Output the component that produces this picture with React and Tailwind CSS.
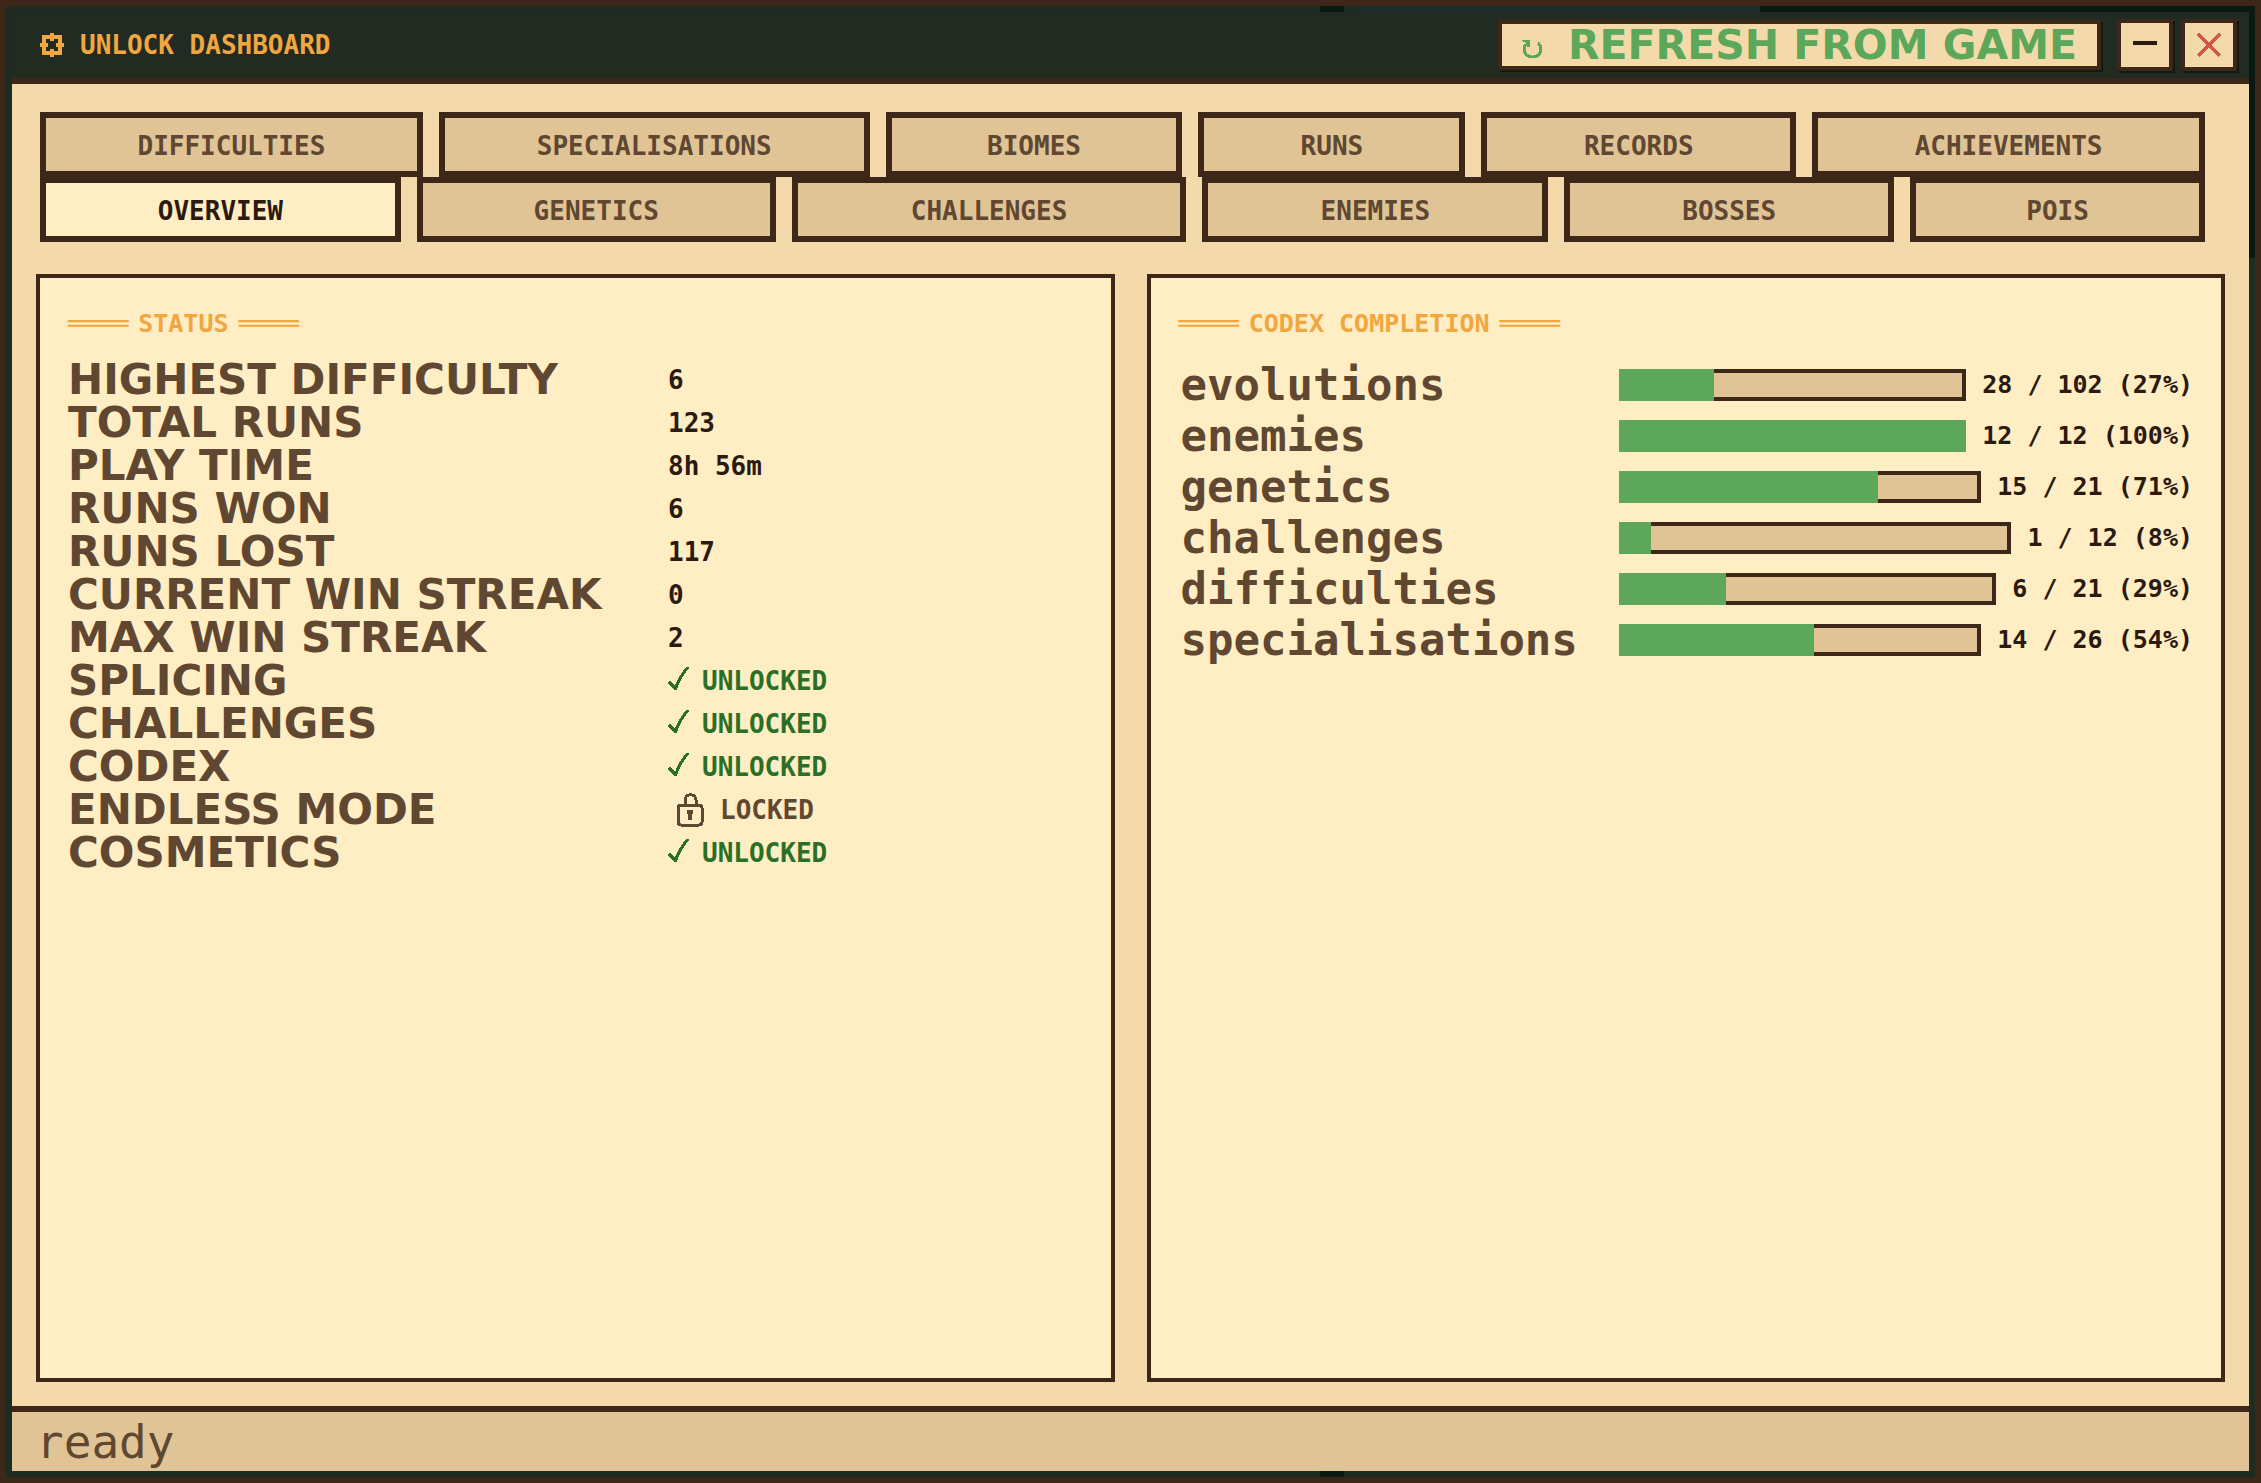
const topTabs = [
  'DIFFICULTIES',
  'SPECIALISATIONS',
  'BIOMES',
  'RUNS',
  'RECORDS',
  'ACHIEVEMENTS',
];

const bottomTabs = [
  'OVERVIEW',
  'GENETICS',
  'CHALLENGES',
  'ENEMIES',
  'BOSSES',
  'POIS',
];

const stats = [
  { label: 'HIGHEST DIFFICULTY', value: '6' },
  { label: 'TOTAL RUNS', value: '123' },
  { label: 'PLAY TIME', value: '8h 56m' },
  { label: 'RUNS WON', value: '6' },
  { label: 'RUNS LOST', value: '117' },
  { label: 'CURRENT WIN STREAK', value: '0' },
  { label: 'MAX WIN STREAK', value: '2' },
  { label: 'SPLICING', unlocked: true },
  { label: 'CHALLENGES', unlocked: true },
  { label: 'CODEX', unlocked: true },
  { label: 'ENDLESS MODE', unlocked: false },
  { label: 'COSMETICS', unlocked: true },
];

const codex = [
  { name: 'evolutions', found: 28, total: 102 },
  { name: 'enemies', found: 12, total: 12 },
  { name: 'genetics', found: 15, total: 21 },
  { name: 'challenges', found: 1, total: 12 },
  { name: 'difficulties', found: 6, total: 21 },
  { name: 'specialisations', found: 14, total: 26 },
];

const GearIcon = () => (
  <svg
    width="24"
    height="24"
    viewBox="0 0 12 12"
    fill="currentColor"
    shapeRendering="crispEdges"
  >
    <path
      fillRule="evenodd"
      d="M5 0h2v1h4v4h1v2h-1v4H7v1H5v-1H1V7H0V5h1V1h4zM3 3h2v1h2V3h2v2H8v2h1v2H7V8H5v1H3V7h1V5H3z"
    />
  </svg>
);

const RefreshIcon = () => (
  <svg
    width="22"
    height="18"
    viewBox="0 0 22 18"
    fill="none"
    shapeRendering="crispEdges"
    className="mt-2"
  >
    <path d="M0 0h8v7H5V4L0 1z" fill="currentColor" />
    <path d="M4 4A8.5 8 0 1 0 16 3" stroke="currentColor" strokeWidth="3" />
  </svg>
);

const CloseIcon = () => (
  <svg
    width="24"
    height="24"
    viewBox="0 0 24 24"
    stroke="currentColor"
    strokeWidth="3"
    shapeRendering="crispEdges"
  >
    <path d="M1 1l22 22M23 1L1 23" />
  </svg>
);

const CheckIcon = () => (
  <svg
    width="22"
    height="24"
    viewBox="0 0 22 24"
    fill="none"
    stroke="currentColor"
    shapeRendering="crispEdges"
    className="mb-1"
  >
    <path d="M1 15l7 7" strokeWidth="4" />
    <path d="M7 23C10 14 14 7 20 0" strokeWidth="3" />
  </svg>
);

const LockIcon = () => (
  <svg
    width="28"
    height="34"
    viewBox="0 0 28 34"
    fill="none"
    stroke="currentColor"
    strokeWidth="3"
    shapeRendering="crispEdges"
  >
    <rect x="2" y="12" width="24" height="20" rx="3" />
    <path d="M9 11V7c0-7 11-7 11 0v4" />
    <path d="M11 17h6v4h-1v6h-4v-6h-1z" fill="currentColor" stroke="none" />
  </svg>
);

const Tab = ({ label, active }) => (
  <button
    role="tab"
    aria-selected={active}
    className={
      active
        ? 'h-[65px] border-6 border-[#3c2718] bg-[#ffedc3] pt-0.5 text-[#2a1a10]'
        : 'h-[65px] border-6 border-[#3c2718] bg-[#e0c495] pt-0.5 text-[#5f4731]'
    }
  >
    {label}
  </button>
);

const Panel = ({ title, children }) => (
  <section className="border-4 border-[#3c2718] bg-[#ffedc3] px-7 pt-[30px]">
    <h2 className="flex gap-2.5 text-[25px] leading-8 text-[#f2a640]">
      <span>════</span>
      <span>{title}</span>
      <span>════</span>
    </h2>
    {children}
  </section>
);

const StatValue = ({ value, unlocked }) => {
  if (value) return <span className="text-[#2a1a10]">{value}</span>;
  if (unlocked) {
    return (
      <span className="flex items-center gap-3 text-[#2a6f27]">
        <CheckIcon />
        UNLOCKED
      </span>
    );
  }
  return (
    <span className="flex items-center gap-4 pl-2 text-[#5f4731]">
      <LockIcon />
      LOCKED
    </span>
  );
};

const CodexRow = ({ name, found, total }) => {
  const ratio = found / total;
  return (
    <div className="flex h-8 items-center">
      <span className="w-[440px] shrink-0 pl-0.5 text-[44px] leading-8 text-[#5f4731]">
        {name}
      </span>
      <div className="relative h-8 flex-1 border-4 border-[#3c2718] bg-[#e0c495]">
        {/* the fill covers the border of the track */}
        <div
          className="absolute -inset-y-1 -left-1 bg-[#5ca75a]"
          style={{ width: `calc(${ratio * 100}% + ${ratio * 8}px)` }}
        />
      </div>
      <span className="ml-4 text-[25px] whitespace-nowrap text-[#2a1a10]">
        {found} / {total} ({Math.round(ratio * 100)}%)
      </span>
    </div>
  );
};

const App = () => (
  <div className="relative flex min-h-screen flex-col border-6 border-[#3c2718] bg-[#1e2b22] p-1.5 font-['DejaVu_Sans_Mono',monospace] text-[26px] leading-8 font-bold">
    {/* edges of the scene behind the window */}
    <div className="absolute top-0 right-0 h-1.5 w-[22%] bg-[#0a1912]" />
    <div className="absolute top-0 right-[22%] h-1.5 w-[18%] bg-[#1b2c2a]" />
    <div className="absolute top-0 right-[40.5%] h-1.5 w-6 bg-[#0a1912]" />
    <div className="absolute right-[40.5%] bottom-0 h-1.5 w-6 bg-[#0a1912]" />
    <div className="absolute top-0 right-0 h-[252px] w-1.5 bg-[#0a1912]" />

    <header className="flex h-[72px] items-center border-b-6 border-[#3c2718] bg-[#212b21] pr-3 pl-7">
      <h1 className="flex items-center gap-4 text-[#f2a640]">
        <GearIcon />
        UNLOCK DASHBOARD
      </h1>
      <div className="ml-auto flex items-center">
        <button className="flex h-[50px] items-center gap-6 border-4 border-[#3c2718] bg-[#f4daab] px-5 font-['DejaVu_Sans',sans-serif] text-[41px] leading-10 text-[#5ca75a] shadow-[2px_2px_0_#111a12]">
          <RefreshIcon />
          REFRESH FROM GAME
        </button>
        <button
          aria-label="Minimise"
          className="ml-4 flex h-[52px] w-14 items-center justify-center border-4 border-[#3c2718] bg-[#f4daab] shadow-[2px_2px_0_#111a12]"
        >
          <span className="mb-1 h-1 w-6 bg-[#2a1a10]" />
        </button>
        <button
          aria-label="Close"
          className="ml-2 flex h-[52px] w-14 items-center justify-center border-4 border-[#3c2718] bg-[#f4daab] text-[#d4554a] shadow-[2px_2px_0_#111a12]"
        >
          <CloseIcon />
        </button>
      </div>
    </header>

    <main className="flex flex-1 flex-col bg-[#f4daab] px-6 pt-7 pb-6">
      <nav role="tablist" className="mr-5 ml-1">
        <div className="grid grid-cols-[383fr_431fr_297fr_267fr_315fr_393fr] gap-4">
          {topTabs.map((label) => (
            <Tab key={label} label={label} active={false} />
          ))}
        </div>
        <div className="grid grid-cols-[361fr_359fr_395fr_346fr_330fr_295fr] gap-4">
          {bottomTabs.map((label) => (
            <Tab key={label} label={label} active={label === 'OVERVIEW'} />
          ))}
        </div>
      </nav>

      <div className="mt-8 grid flex-1 grid-cols-2 gap-8">
        <Panel title="STATUS">
          <dl className="mt-[18px]">
            {stats.map((stat) => (
              <div key={stat.label} className="flex h-[43px] items-center">
                <dt className="w-[600px] font-['DejaVu_Sans',sans-serif] text-[42px] leading-10 text-[#5f4731]">
                  {stat.label}
                </dt>
                <dd>
                  <StatValue value={stat.value} unlocked={stat.unlocked} />
                </dd>
              </div>
            ))}
          </dl>
        </Panel>

        <Panel title="CODEX COMPLETION">
          <div className="mt-[29px] flex flex-col gap-[19px]">
            {codex.map((row) => (
              <CodexRow key={row.name} {...row} />
            ))}
          </div>
        </Panel>
      </div>
    </main>

    <footer className="flex h-[65px] items-center border-t-6 border-[#3c2718] bg-[#e0c495] px-6 text-[46px] font-normal text-[#5f4731]">
      ready
    </footer>
  </div>
);

export default App;
